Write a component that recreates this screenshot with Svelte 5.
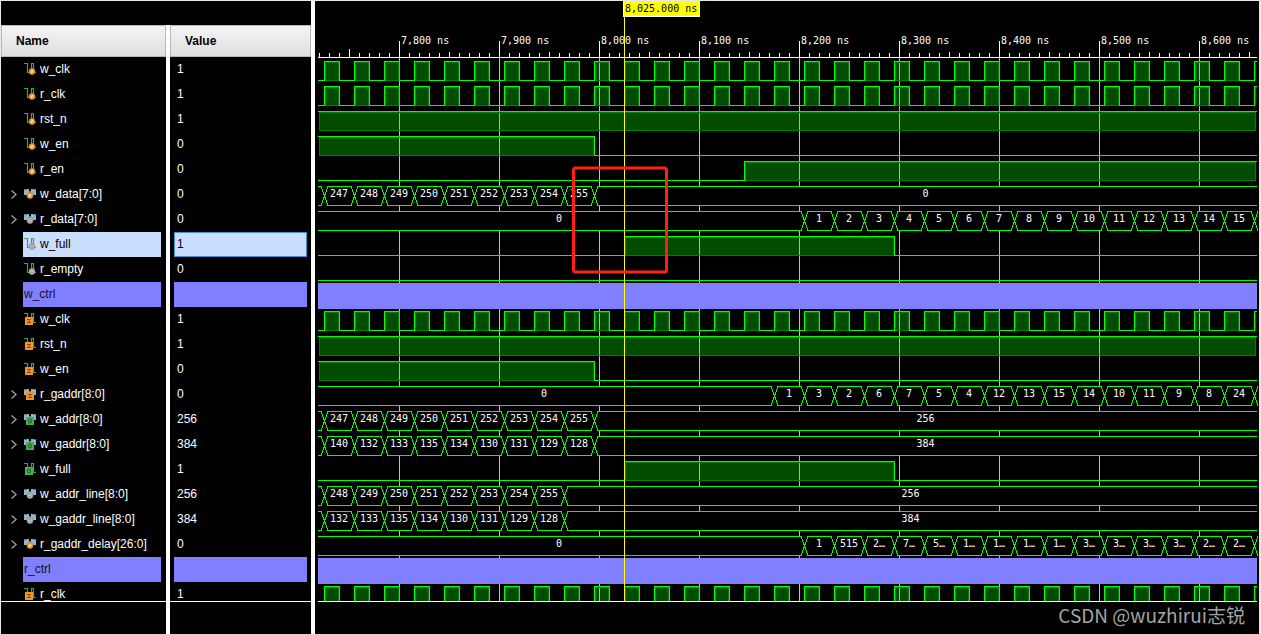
<script>
  const T0 = 7719;
  const PERIOD = 30;
  const CURSOR = 8025;

  let plotWidth = $state(941);
  let selected = $state(7);

  const x = (t) => t - T0;
  let end = $derived(plotWidth - 2);

  const clk = { type: 'bit', clock: true };
  const bit = (...high) => ({ type: 'bit', high });
  const bus = (start, first, values, last) => ({ type: 'bus', start, first, values, last });
  const words = (s) => s.split(' ');

  const signals = [
    { name: 'w_clk', value: '1', icon: 'bit', badge: 'in', wave: clk },
    { name: 'r_clk', value: '1', icon: 'bit', badge: 'in', wave: clk },
    { name: 'rst_n', value: '1', icon: 'bit', badge: 'in', wave: bit(0, Infinity) },
    { name: 'w_en', value: '0', icon: 'bit', badge: 'in', wave: bit(0, 7995) },
    { name: 'r_en', value: '0', icon: 'bit', badge: 'in', wave: bit(8145, Infinity) },
    { name: 'w_data[7:0]', value: '0', icon: 'bus', badge: 'in', wave: bus(7725, '', words('247 248 249 250 251 252 253 254 255'), '0') },
    { name: 'r_data[7:0]', value: '0', icon: 'bus', badge: 'net', wave: bus(8205, '0', words('1 2 3 4 5 6 7 8 9 10 11 12 13 14 15'), '') },
    { name: 'w_full', value: '1', icon: 'bit', badge: 'net', wave: bit(8025, 8295) },
    { name: 'r_empty', value: '0', icon: 'bit', badge: 'net', wave: bit() },
    { name: 'w_ctrl', group: true },
    { name: 'w_clk', value: '1', icon: 'bit', badge: 'portIn', wave: clk },
    { name: 'rst_n', value: '1', icon: 'bit', badge: 'portIn', wave: bit(0, Infinity) },
    { name: 'w_en', value: '0', icon: 'bit', badge: 'portIn', wave: bit(0, 7995) },
    { name: 'r_gaddr[8:0]', value: '0', icon: 'bus', badge: 'portIn', wave: bus(8175, '0', words('1 3 2 6 7 5 4 12 13 15 14 10 11 9 8 24'), '') },
    { name: 'w_addr[8:0]', value: '256', icon: 'bus', badge: 'portOut', wave: bus(7725, '', words('247 248 249 250 251 252 253 254 255'), '256') },
    { name: 'w_gaddr[8:0]', value: '384', icon: 'bus', badge: 'portOut', wave: bus(7725, '', words('140 132 133 135 134 130 131 129 128'), '384') },
    { name: 'w_full', value: '1', icon: 'bit', badge: 'portOut', wave: bit(8025, 8295) },
    { name: 'w_addr_line[8:0]', value: '256', icon: 'bus', badge: 'net', wave: bus(7725, '', words('248 249 250 251 252 253 254 255'), '256') },
    { name: 'w_gaddr_line[8:0]', value: '384', icon: 'bus', badge: 'net', wave: bus(7725, '', words('132 133 135 134 130 131 129 128'), '384') },
    { name: 'r_gaddr_delay[26:0]', value: '0', icon: 'bus', badge: 'in', wave: bus(8205, '0', words('1 515 2… 7… 5… 1… 1… 1… 1… 3… 3… 3… 3… 2… 2…'), '') },
    { name: 'r_ctrl', group: true },
    { name: 'r_clk', value: '1', icon: 'bit', badge: 'portIn', wave: clk }
  ];

  // High intervals of a one-bit signal, in plot pixels
  function highs(wave, limit) {
    if (wave.clock) {
      const out = [];
      for (let a = x(7725); a < limit; a += PERIOD) out.push([a, a + PERIOD / 2]);
      return out;
    }
    return wave.high.length ? [[x(wave.high[0]), x(wave.high[1])]] : [];
  }

  function bitShape(wave, limit) {
    const hs = highs(wave, limit);
    let d = '';
    let at = 0;
    const rects = [];
    for (const [a, b] of hs) {
      if (a > at) d += `M${at} 23.5H${a + 1}M${a + 0.5} 24V4`;
      const from = Math.max(a, 0);
      const to = Math.min(b + 1, limit);
      d += `M${from} 4.5H${to}`;
      if (b < limit) d += `M${b + 0.5} 4V24`;
      const right = Math.min(b - 1, limit - 2);
      rects.push({ x: from + 1, w: Math.max(right - from, 1) });
      at = b;
    }
    if (at < limit) d += `M${at} 23.5H${limit}`;
    return { d, rects };
  }

  function busShape(wave, limit) {
    const { start, first, values, last } = wave;
    const cuts = [start, ...values.map((_, i) => start + PERIOD * (i + 1))].map(x);
    const labels = [];
    if (first) labels.push({ x: (cuts[0] - 4) / 2, text: first });
    values.forEach((v, i) => labels.push({ x: (cuts[i] + cuts[i + 1]) / 2, text: v }));
    if (last) labels.push({ x: (cuts[cuts.length - 1] + limit) / 2, text: last });
    let d = '';
    let at = 0;
    for (const c of cuts) {
      d += `M${at} 4.5H${c - 3}M${at} 23.5H${c - 3}`;
      d += `M${c - 3} 4.5L${c + 4} 23.5M${c - 3} 23.5L${c + 4} 4.5`;
      at = c + 4;
    }
    if (at < limit) d += `M${at} 4.5H${limit}M${at} 23.5H${limit}`;
    return { d, labels };
  }

  let ticks = $derived.by(() => {
    let d = '';
    for (let t = 7720; x(t) < end; t += 10) {
      if (t % 100 === 0) continue;
      const top = t === 7750 ? 48 : t % 50 === 0 ? 51 : 52;
      d += `M${x(t) + 0.5} ${top}V56`;
    }
    return d;
  });

  let majors = $derived.by(() => {
    const out = [];
    for (let t = 7800; x(t) < end; t += 100) out.push(t);
    return out;
  });
</script>

{#snippet icon(kind, badge)}
  <svg class="icon" width="13" height="13" viewBox="0 0 13 13" aria-hidden="true">
    {#if kind === 'bit'}
      <path d="M0 0.5H3.5V9.5H7.5V0.5H9.5V9.5H12" fill="none" stroke="#3fa352" stroke-width="1.2" />
    {:else}
      <path d="M0 1H5V3H7V1H12V7H9L7 9H5L3 7H0Z" fill="#8fb6cc" />
      <path d="M0 1H3V2H0ZM9 1H12V2H9ZM5 3H7V6H5Z" fill="#5c7683" />
    {/if}
    {#if badge === 'in' || badge === 'net'}
      {@const cx = kind === 'bit' ? 8 : 6}
      {@const cy = kind === 'bit' ? 8.5 : 7.5}
      <circle {cx} {cy} r="3" fill={badge === 'in' ? '#f9a63c' : '#c4c4c4'} stroke={badge === 'in' ? '#c47a22' : '#858585'} stroke-width="0.8" />
      {#if badge === 'in'}
        <path d="M{cx - 0.8} {cy + 1.2}L{cx + 0.8} {cy - 1.2}" stroke="#ffe9c4" stroke-width="1.2" />
      {:else}
        <circle {cx} {cy} r="1.2" fill="#f0f0f0" stroke="#777" stroke-width="0.8" />
      {/if}
    {:else}
      {@const bx = kind === 'bit' ? 1 : 2}
      <rect x={bx} y="4" width="8" height="8" fill={badge === 'portIn' ? '#f2922a' : '#4fa850'} />
      {#if badge === 'portIn'}
        <path d="M{bx + 2} 6.5H{bx + 6}M{bx + 2} 9.5H{bx + 6}M{bx + 4} 6.5V9.5" stroke="#8a4d10" fill="none" />
      {:else}
        <ellipse cx={bx + 4} cy="8" rx="1.5" ry="2" stroke="#1d5f25" fill="none" />
      {/if}
    {/if}
  </svg>
{/snippet}

<main class="viewer">
  <section class="side">
    <div class="list">
      <div class="spacer"></div>
      <table>
        <colgroup><col class="name-col" /><col /></colgroup>
        <thead>
          <tr>
            <th scope="col"><div class="head">Name</div></th>
            <th scope="col"><div class="head">Value</div></th>
          </tr>
        </thead>
        <tbody>
          {#each signals as s, i}
            <tr class:group={s.group} class:selected={selected === i} onclick={() => (selected = i)}>
              <td>
                <div class="cell">
                  <span class="gutter">
                    {#if s.icon === 'bus'}
                      <button class="toggle" aria-label="Expand {s.name}">
                        <svg width="6" height="9" viewBox="0 0 6 9"><path d="M0.5 0.5L5 4.5L0.5 8.5" fill="none" stroke="#a0a0a0" stroke-width="1.3" /></svg>
                      </button>
                    {/if}
                  </span>
                  <span class="label">
                    {#if s.icon}{@render icon(s.icon, s.badge)}{/if}{s.name}
                  </span>
                </div>
              </td>
              <td class="value"><div class="box">{s.value ?? ''}</div></td>
            </tr>
          {/each}
        </tbody>
      </table>
    </div>
    <div class="side-foot"><span></span><span></span></div>
  </section>

  <section class="waves">
    <div class="plot" bind:clientWidth={plotWidth}>
      <svg class="ruler" width="100%" height="56">
        <path d={ticks} class="white" />
        <path d="M0 56.5H{end}" class="white" />
        {#each majors as t}
          <path d="M{x(t) + 0.5} 40V56" class="white" />
          <text x={x(t) + 2} y="43">{t.toLocaleString('en-US')} ns</text>
        {/each}
      </svg>
      <div class="rows">
        <svg class="grid" width="100%" height="100%">
          {#each majors as t}
            <rect x={x(t)} y="1" width="1" height="100%" fill="#c0c0c0" />
          {/each}
        </svg>
        {#each signals as s}
          <svg class="row" width="100%" height="25">
            {#if s.group}
              <rect x="0" y="1" width={end} height="26" fill="#8080ff" />
            {:else if s.wave.type === 'bit'}
              {@const b = bitShape(s.wave, end)}
              {#each b.rects as r}
                <rect x={r.x} y="5" width={r.w} height="19" fill="#00ff00" fill-opacity="0.3" />
                {#if r.w > 2}
                  <rect x={r.x + 0.5} y="5.5" width={r.w - 1} height="18" fill="none" stroke="#008000" />
                {/if}
              {/each}
              <path d={b.d} class="green" />
            {:else}
              {@const b = busShape(s.wave, end)}
              <rect x="0" y="4" width={end} height="20" fill="#000" />
              <path d={b.d} class="green" />
              {#each b.labels as l}
                <text x={l.x} y="15" text-anchor="middle">{l.text}</text>
              {/each}
            {/if}
          </svg>
        {/each}
      </div>
      <svg class="overlay" width="100%" height="100%" aria-hidden="true">
        <path d="M{x(CURSOR) + 0.5} 16V600" stroke="#ffff00" />
        <rect x="255.5" y="167" width="93" height="104" rx="2" fill="none" stroke="#ff2010" stroke-width="3" />
      </svg>
      <div class="cursor-tag" style="left: {x(CURSOR) - 1}px">8,025.000 ns</div>
    </div>
    <footer>CSDN @wuzhirui志锐</footer>
  </section>
</main>

<style>
  :global(body) {
    background: #fff;
  }
  .viewer {
    box-sizing: border-box;
    height: 100vh;
    display: grid;
    grid-template-columns: 310px minmax(0, 1fr);
    grid-template-rows: minmax(0, 1fr);
    column-gap: 4px;
    border: solid #e6e8e8;
    border-width: 1px 2px 0 1px;
    background: #fff;
    color: #fff;
    font: 12px/25px "Liberation Sans", Arial, sans-serif;
  }
  .side,
  .waves {
    display: flex;
    flex-direction: column;
    min-height: 0;
    min-width: 0;
  }
  .list {
    flex: 1;
    min-height: 0;
    overflow: hidden;
    background: #000;
  }
  .spacer {
    height: 24px;
  }
  table {
    width: 100%;
    table-layout: fixed;
    border-collapse: separate;
    border-spacing: 0;
  }
  .name-col {
    width: 165px;
  }
  th,
  td {
    padding: 0;
    text-align: left;
  }
  th + th,
  td + td {
    border-left: 4px solid #fff;
  }
  .head {
    box-sizing: border-box;
    height: 32px;
    padding-left: 14px;
    border: 1px solid #b8b8b8;
    background: linear-gradient(#f4f4f4, #dfdfe1);
    color: #000;
    line-height: 30px;
  }
  .cell {
    display: flex;
    height: 25px;
    padding-right: 5px;
  }
  .gutter {
    display: flex;
    width: 22px;
    align-items: center;
    justify-content: center;
  }
  .toggle {
    display: flex;
    margin-left: 4px;
    padding: 0;
    border: 0;
    background: none;
  }
  .label {
    display: flex;
    flex: 1;
    align-items: center;
    padding-left: 1px;
    white-space: nowrap;
  }
  .icon {
    margin-right: 3px;
  }
  .value {
    padding: 0 4px;
  }
  .box {
    box-sizing: border-box;
    height: 25px;
    padding-left: 3px;
  }
  .group .label,
  .group .box {
    background: #8080ff;
    color: #101030;
  }
  .selected .label,
  .selected .box {
    background: #cadeff;
    color: #000;
  }
  .selected .box {
    padding-left: 2px;
    border: 1px solid #3c94d4;
    line-height: 23px;
  }
  .side-foot {
    display: grid;
    grid-template-columns: 165px 1fr;
    column-gap: 4px;
    height: 33px;
  }
  .side-foot span {
    border-top: 1px solid #fff;
    background: #000;
  }
  .waves {
    padding-left: 3px;
    background: #000;
  }
  .plot {
    position: relative;
    flex: 1;
    min-height: 0;
    display: flex;
    flex-direction: column;
  }
  .ruler {
    flex: none;
    overflow: visible;
    z-index: 1;
  }
  .rows {
    position: relative;
    flex: 1;
    min-height: 0;
    overflow: hidden;
  }
  .grid,
  .overlay {
    position: absolute;
    inset: 0;
  }
  .overlay {
    z-index: 2;
    pointer-events: none;
  }
  .row {
    position: relative;
    display: block;
    overflow: visible;
  }
  .white {
    fill: none;
    stroke: #fff;
  }
  .green {
    fill: none;
    stroke: #00ff00;
    shape-rendering: crispEdges;
  }
  text,
  .cursor-tag {
    fill: #fff;
    font-family: "DejaVu Sans Mono", "Liberation Mono", monospace;
    font-size: 10px;
  }
  .cursor-tag {
    position: absolute;
    top: 0;
    z-index: 2;
    padding: 0 2px 0 1px;
    border: solid #fff;
    border-width: 0 1px 1px;
    background: #ffff00;
    color: #000;
    line-height: 15px;
    white-space: nowrap;
  }
  footer {
    box-sizing: border-box;
    height: 33px;
    margin-right: 2px;
    padding-right: 12px;
    border-top: 1px solid #fff;
    color: #a4a4a4;
    font: 19px/26px "Noto Sans CJK SC", sans-serif;
    text-align: right;
  }
</style>
